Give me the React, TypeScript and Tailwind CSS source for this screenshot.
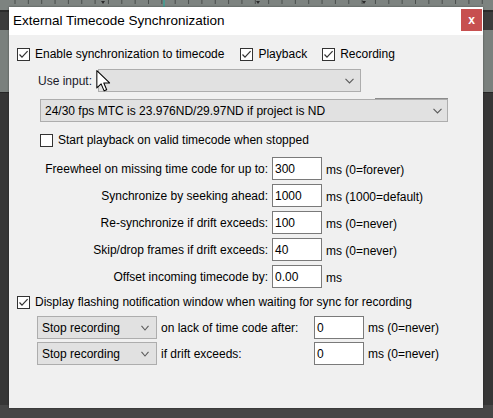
import React from "react";

const Check = ({ checked }: { checked: boolean }) => (
  <div className="w-[13px] h-[13px] shrink-0 border border-[#333333] bg-white flex items-center justify-center">
    {checked && (
      <svg width="11" height="11" viewBox="0 0 11 11">
        <polyline points="1.5,5.5 4,8.2 9.6,2.2" fill="none" stroke="#333333" strokeWidth="1.2" />
      </svg>
    )}
  </div>
);

const Chevron = ({ w = 9 }: { w?: number }) => (
  <svg width={w} height="6" viewBox={`0 0 ${w} 6`} className="shrink-0">
    <polyline points={`0.5,0.8 ${w / 2},5 ${w - 0.5},0.8`} fill="none" stroke="#5a5a5a" strokeWidth="1.1" />
  </svg>
);

const NumInput = ({ value }: { value: string }) => (
  <div className="w-[50px] h-[23px] shrink-0 bg-white border border-[#7a7a7a] flex items-center pl-[2px] text-black">
    {value}
  </div>
);

const Ruler = () => {
  const ticks = [];
  for (let i = 0; i < 38; i++) {
    const x = 15 + i * 13.35;
    ticks.push(<line key={i} x1={x} y1={0} x2={x} y2={4} stroke="#4a4e4c" strokeWidth="1" />);
  }
  return (
    <svg width="493" height="10" className="block">
      <rect width="493" height="10" fill="#7d8380" />
      {ticks}
      <line x1="164" y1="0" x2="164" y2="8" stroke="#2fa89a" strokeWidth="1.2" />
      <polygon points="101,1 105,1 103,4" fill="#2c2c2c" />
      <polygon points="256,1 260,1 258,4" fill="#2c2c2c" />
      <polygon points="362,1 366,1 364,4" fill="#2c2c2c" />
    </svg>
  );
};

export default function App() {
  return (
    <div className="relative w-[493px] h-[418px] overflow-hidden bg-[#363636] font-['Liberation_Sans',Arial,sans-serif] text-[12px] leading-none text-black">
      {/* background app */}
      <div className="flex flex-col w-full h-full">
        <Ruler />
        <div className="h-[2px] bg-[#2b2b2b]" />
        <div className="h-[18px] bg-[#3c3c3c]" />
        <div className="h-[62px] bg-[#7a807d]" />
        <div className="h-px bg-[#262626]" />
        <div className="flex-1 bg-[#363636]" />
        <div className="h-[13px] bg-[#464646]" />
      </div>

      {/* dialog window */}
      <div className="absolute left-[9px] top-[7px] w-[474px] h-[401px] flex flex-col shadow-[0_0_2px_rgba(0,0,0,0.4)]">
        <div className="h-[28px] bg-white flex items-start justify-between">
          <div className="h-[28px] flex items-center pl-[4px] text-[13.5px] text-black">External Timecode Synchronization</div>
          <div className="mt-[2px] mr-[1px] w-[21px] h-[22px] bg-[#c75050] flex items-center justify-center text-white text-[12px] font-bold">x</div>
        </div>

        <div className="flex-1 bg-[#f0f0f0] flex flex-col">
          {/* enable row */}
          <div className="mt-[11px] h-[16px] pl-[8px] flex items-center">
            <Check checked />
            <span className="ml-[5px]">Enable synchronization to timecode</span>
            <div className="ml-[16px]"><Check checked /></div>
            <span className="ml-[5px]">Playback</span>
            <div className="ml-[15px]"><Check checked /></div>
            <span className="ml-[5px]">Recording</span>
          </div>

          {/* use input */}
          <div className="mt-[7px] h-[23px] pl-[29px] flex items-center">
            <span className="w-[60px] text-[#1a1a2a]">Use input:</span>
            <div className="w-[263px] h-[23px] bg-[#e1e1e1] border border-[#adadad] flex items-center justify-end pr-[6px]">
              <Chevron />
            </div>
          </div>

          {/* fps dropdown */}
          <div className="mt-[7px] h-[23px] pl-[31px] flex">
            <div className="relative w-[408px] h-[23px] bg-[#e1e1e1] border border-[#adadad] flex items-center justify-between pl-[4px] pr-[5px]">
              <div className="absolute -top-[2px] -right-px w-[73px] h-px bg-[#8c8c8c]" />
              <span>24/30 fps MTC is 23.976ND/29.97ND if project is ND</span>
              <Chevron />
            </div>
          </div>

          {/* start playback */}
          <div className="mt-[10px] h-[16px] pl-[31px] flex items-center">
            <Check checked={false} />
            <span className="ml-[5px]">Start playback on valid timecode when stopped</span>
          </div>

          {/* numeric rows */}
          <div className="mt-[9px] flex flex-col gap-[4px]">
            {[
              ["Freewheel on missing time code for up to:", "300", "ms (0=forever)"],
              ["Synchronize by seeking ahead:", "1000", "ms (1000=default)"],
              ["Re-synchronize if drift exceeds:", "100", "ms (0=never)"],
              ["Skip/drop frames if drift exceeds:", "40", "ms (0=never)"],
              ["Offset incoming timecode by:", "0.00", "ms"],
            ].map(([label, val, unit]) => (
              <div key={label} className="h-[23px] flex items-center">
                <span className="w-[259px] text-right">{label}</span>
                <div className="ml-[4px]"><NumInput value={val} /></div>
                <span className="ml-[4px] pt-[2px]">{unit}</span>
              </div>
            ))}
          </div>

          {/* display flashing */}
          <div className="mt-[6px] h-[16px] pl-[8px] flex items-center">
            <Check checked />
            <span className="ml-[5px]">Display flashing notification window when waiting for sync for recording</span>
          </div>

          {/* stop recording rows */}
          <div className="mt-[6px] flex flex-col gap-[3px] pl-[28px]">
            {[
              ["on lack of time code after:", "0"],
              ["if drift exceeds:", "0"],
            ].map(([label, val]) => (
              <div key={label} className="h-[23px] flex items-center">
                <div className="w-[120px] h-[23px] bg-[#e1e1e1] border border-[#adadad] flex items-center justify-between pl-[4px] pr-[7px]">
                  <span>Stop recording</span>
                  <Chevron w={8} />
                </div>
                <span className="ml-[4px] w-[149px]">{label}</span>
                <div className="ml-[4px]"><NumInput value={val} /></div>
                <span className="ml-[4px]">ms (0=never)</span>
              </div>
            ))}
          </div>
        </div>
      </div>

      {/* mouse cursor */}
      <svg className="absolute left-[96px] top-[70px]" width="15" height="22" viewBox="0 0 12.5 19">
        <path d="M0.5 0.5 L0.5 15.5 L4.2 12 L6.8 18 L9 17 L6.5 11.2 L11.5 11.2 Z" fill="#ffffff" stroke="#000000" strokeWidth="0.9" strokeLinejoin="round" />
      </svg>
    </div>
  );
}
